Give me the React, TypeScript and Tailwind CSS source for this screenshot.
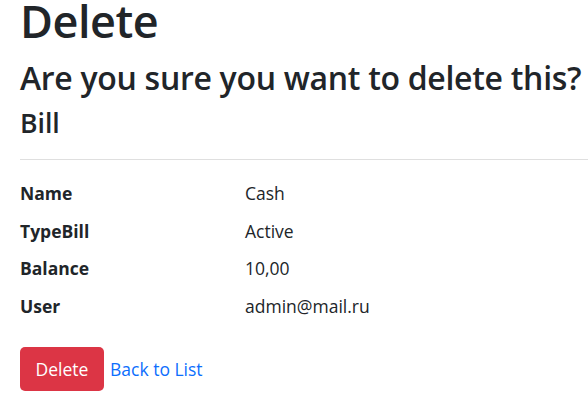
import React from "react";

const rows: [string, string][] = [
  ["Name", "Cash"],
  ["TypeBill", "Active"],
  ["Balance", "10,00"],
  ["User", "admin@mail.ru"],
];

export default function App() {
  return (
    <div
      className="w-[588px] h-[404px] overflow-hidden bg-white pl-[20px] text-[#212529]"
      style={{ fontFamily: '"Open Sans", "Noto Sans", sans-serif' }}
    >
      <h1 className="text-[45px] leading-[41px] font-semibold m-0 tracking-[-0.5px]">Delete</h1>
      <h3 className="text-[32px] leading-[38px] font-semibold mt-[18px] mb-0 whitespace-nowrap tracking-[-0.3px]">
        Are you sure you want to delete this?
      </h3>
      <div>
        <h4 className="text-[26.6px] leading-[32px] font-semibold mt-[10px] mb-0">Bill</h4>
        <hr className="mt-[20px] mb-0 border-0 border-t border-[#dfdfdf]" />
        <dl className="mt-[19px] mb-0 text-[17.5px]">
          {rows.map(([k, v]) => (
            <div key={k} className="flex leading-[28px] mb-[9.5px]">
              <dt className="w-[225px] font-bold">{k}</dt>
              <dd className="m-0">{v}</dd>
            </div>
          ))}
        </dl>
      </div>
      <div className="flex items-center pt-[18px]">
        <button className="h-[44px] w-[84px] rounded-[5px] bg-[#dc3545] text-white text-[17.5px] flex items-center justify-center">
          Delete
        </button>
        <a className="ml-[6px] text-[#0d6efd] text-[17.5px] leading-[28px]">Back to List</a>
      </div>
    </div>
  );
}
